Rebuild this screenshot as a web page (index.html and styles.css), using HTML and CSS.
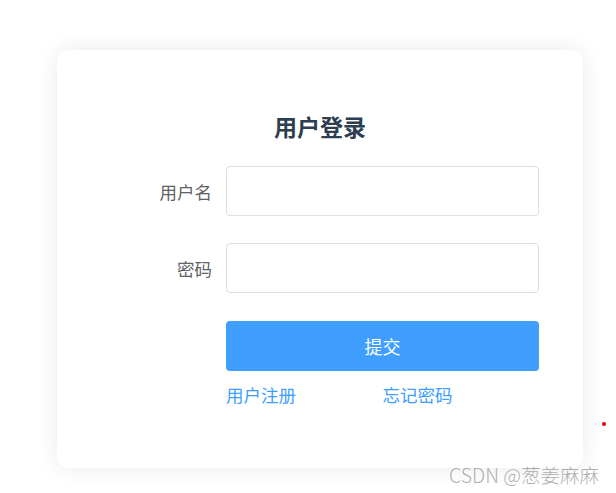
FILE: index.html
```html
<!DOCTYPE html>
<html lang="zh-CN">
<head>
<meta charset="utf-8">
<title>用户登录</title>
<link rel="stylesheet" href="styles.css">
</head>
<body>
<div class="page">
  <div class="card">
    <h2 class="title">用户登录</h2>
    <form class="form">
      <div class="form-item">
        <label class="label">用户名</label>
        <input class="input" type="text">
      </div>
      <div class="form-item">
        <label class="label">密码</label>
        <input class="input" type="password">
      </div>
      <div class="form-item">
        <span class="label"></span>
        <button class="btn" type="button">提交</button>
      </div>
      <div class="form-item links-row">
        <span class="label"></span>
        <div class="links">
          <a class="link">用户注册</a>
          <a class="link">忘记密码</a>
        </div>
      </div>
    </form>
  </div>
  <span class="dot"></span>
  <span class="watermark">CSDN @葱姜麻麻</span>
</div>
</body>
</html>
```

FILE: styles.css
```css
html, body {
  margin: 0;
  padding: 0;
  background: #ffffff;
  font-family: "Noto Sans CJK SC", "Noto Sans", sans-serif;
}
.page {
  position: relative;
  width: 616px;
  height: 493px;
  overflow: hidden;
  padding: 50px 0 0 57px;
  box-sizing: border-box;
}
.card {
  width: 526px;
  height: 418px;
  box-sizing: border-box;
  background: #fff;
  border-radius: 12px;
  box-shadow: 0 0 22px rgba(0, 0, 0, 0.09);
  padding: 60px 44px 0 0;
}
.title {
  margin: 0 0 0 44px;
  text-align: center;
  font-size: 23px;
  line-height: 32px;
  font-weight: 700;
  color: #2c3e50;
}
.form {
  margin-top: 24px;
}
.form-item {
  display: flex;
  align-items: center;
  margin-bottom: 28px;
}
.form-item:first-child {
  margin-bottom: 27px;
}
.label {
  width: 169px;
  flex: none;
  box-sizing: border-box;
  padding-right: 14px;
  text-align: right;
  font-size: 17.5px;
  color: #606266;
}
.input {
  flex: 1;
  height: 50px;
  box-sizing: border-box;
  border: 1px solid #dcdfe6;
  border-radius: 4px;
  background: #fff;
  outline: none;
  margin: 0;
}
.btn {
  flex: 1;
  height: 50px;
  border: none;
  border-radius: 4px;
  background: #409eff;
  color: #fff;
  font-family: inherit;
  font-size: 18px;
  margin: 0;
}
.links-row {
  margin-top: -16px;
}
.links {
  flex: 1;
  display: flex;
}
.link {
  flex: 1;
  color: #409eff;
  font-size: 17.5px;
  line-height: 24px;
}
.dot {
  position: absolute;
  left: 602px;
  top: 422px;
  width: 4px;
  height: 4px;
  border-radius: 50%;
  background: #e60000;
}
.watermark {
  position: absolute;
  left: 449px;
  top: 462px;
  font-size: 19.5px;
  line-height: 26px;
  font-weight: 300;
  color: rgba(120, 120, 120, 0.6);
  white-space: nowrap;
}
```
